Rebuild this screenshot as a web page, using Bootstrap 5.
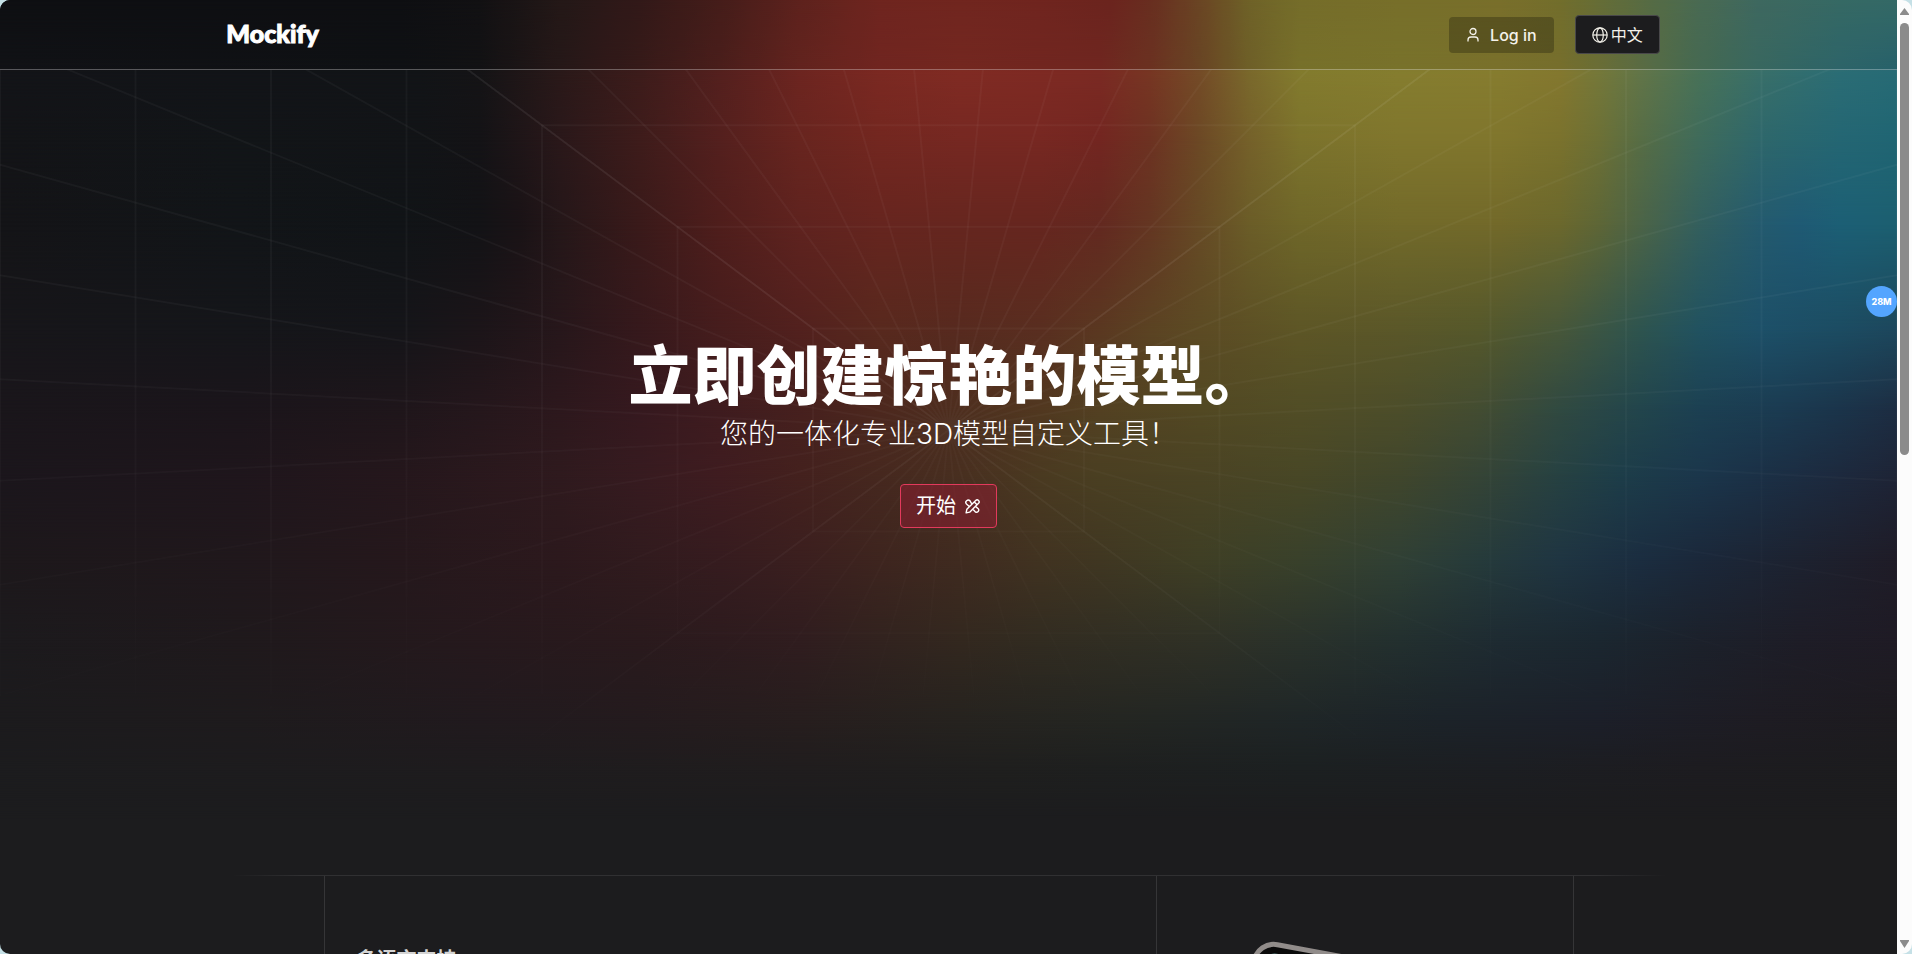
<!DOCTYPE html>
<html lang="zh-CN">
<head>
<meta charset="utf-8">
<meta name="viewport" content="width=device-width, initial-scale=1">
<title>Mockify</title>
<link rel="stylesheet" href="https://cdn.jsdelivr.net/npm/bootstrap@5.3.0/dist/css/bootstrap.min.css">
<style>
  body { background: #c5e0e6; font-family: Inter, "Noto Sans CJK SC", sans-serif; }
  .shell { height: 100vh; }
  .page { background: #1c1c1e; border-radius: 10px 0 0 10px; }
  .wrap { width: 76%; max-width: 1436px; }

  .glow { inset: 0 0 auto 0; height: 820px; }
  .glow-row { position: absolute; inset: 0; }
  .rays { inset: 70px 0 auto 0; height: 780px; -webkit-mask-image: linear-gradient(#000 0, #000 30%, transparent 90%); mask-image: linear-gradient(#000 0, #000 30%, transparent 90%); }
  .rays svg { display: block; width: 100%; height: 780px; }

  .topbar { height: 70px; padding-right: 11px; border-bottom: 1px solid rgba(255,255,255,.3); background: rgba(10,10,12,.08); }
  .brand { font-family: Lato, sans-serif; font-weight: 900; font-size: 25px; line-height: 32px; color: #fff; margin-bottom: 4px; -webkit-text-stroke: 1px #fff; }
  .btn-login, .btn-lang { font-size: 16px; line-height: 24px; color: #f4f2ea; --bs-btn-border-radius: 4px; }
  .btn-login { background: rgba(0,0,0,.25); border: 0; font-weight: 500; height: 36px; padding: 0 17px; gap: 10px; }
  .btn-lang { background: #1c1c1e; border: 1px solid #49484a; height: 39px; padding: 0 16px; gap: 3px; }

  .hero { padding-top: 268px; }
  .hero h1 { font-size: 64px; line-height: 76px; font-weight: 900; color: #fff; }
  .hero p { font-size: 28px; line-height: 40px; font-weight: 300; color: #fff; }
  .btn-start { font-size: 20px; line-height: 28px; color: #fff; height: 44px; margin-top: 30px; padding: 0 15px; gap: 8px; background: rgba(146,28,50,.5); border: 1px solid #e23a5c; --bs-btn-border-radius: 4px; }

  .features { margin-top: 347px; }
  .rule { height: 1px; background: linear-gradient(90deg, transparent, #303032 5%, #303032 95%, transparent); }
  .cells { width: 1250px; max-width: 88%; border: solid #353537; border-width: 0 1px; }
  .cell-text { border-right: 1px solid #353537; padding: 70px 32px 0; }
  .cell-text h2 { font-size: 20px; line-height: 28px; font-weight: 700; color: #d4d4d4; }
  .phone { padding: 65px 0 0 101px; }
  .phone svg { display: block; overflow: visible; }

  .meter { right: 15px; top: 286px; width: 31px; height: 31px; background: #54a5ff; font-size: 9px; font-weight: 800; color: #fff; }
  .scroller { width: 15px; background: #fcfcfc; border-radius: 0 10px 10px 0; padding: 8px 0 6px; }
  .thumb { width: 9px; height: 46%; background: #8b8b8b; border-radius: 5px; margin-top: 7px; }
</style>
</head>
<body>
<div class="shell d-flex overflow-hidden position-relative">
  <div class="page flex-fill position-relative overflow-hidden">
    <div class="glow position-absolute" id="glow" aria-hidden="true"></div>
    <div class="rays position-absolute overflow-hidden" aria-hidden="true">
      <svg viewBox="0 0 1897 780" preserveAspectRatio="none" fill="none" stroke="#fff" stroke-width="2" id="rays"></svg>
    </div>

    <div class="position-relative">
      <header class="topbar d-flex">
        <div class="wrap mx-auto d-flex align-items-center">
          <a class="brand text-decoration-none me-auto" href="#">Mockify</a>
          <div class="d-flex align-items-center" style="gap:21px">
            <button type="button" class="btn btn-login d-flex align-items-center">
              <svg width="14" height="16" viewBox="0 0 14 16" fill="none" stroke="currentColor" stroke-width="1.3"><circle cx="7" cy="4.5" r="3"/><path d="M2 14.5v-1.5a3 3 0 0 1 3-3h4a3 3 0 0 1 3 3v1.500"/></svg>
              Log in
            </button>
            <button type="button" class="btn btn-lang d-flex align-items-center">
              <svg width="16" height="16" viewBox="0 0 16 16" fill="none" stroke="currentColor" stroke-width="1.2"><circle cx="8" cy="8" r="7.200"/><ellipse cx="8" cy="8" rx="3.300" ry="7.200"/><path d="M1 8h14"/></svg>
              中文
            </button>
          </div>
        </div>
      </header>

      <main>
        <section class="hero text-center d-flex flex-column align-items-center">
          <h1 class="mb-0">立即创建惊艳的模型。</h1>
          <p class="mb-0">您的一体化专业3D模型自定义工具！</p>
          <button type="button" class="btn btn-start d-flex align-items-center">
            开始
            <svg width="17" height="17" viewBox="0 0 24 24" fill="none" stroke="currentColor" stroke-width="2" stroke-linejoin="round" stroke-linecap="round"><path d="M10.500 7.500 8.500 4a3.300 3.300 0 0 0-5 4.500L7.500 12M13.500 17l3 3a3.300 3.300 0 0 0 4-4.500L17 12.500M3 21l1-5L16.500 3.500a2.800 2.800 0 0 1 4 4L8 20zM14.500 5.500l4 4"/></svg>
          </button>
        </section>

        <section class="features wrap mx-auto">
          <div class="rule"></div>
          <div class="cells row g-0 mx-auto">
            <div class="col-8 cell-text"><h2>多语言支持</h2></div>
            <div class="col-4 phone">
              <svg width="200" height="120" viewBox="0 0 200 120" aria-hidden="true"><g transform="translate(16 0) rotate(10.500)"><rect x="-16" y="3" width="150" height="300" rx="20" fill="#0a0a0a" stroke="#918c8a" stroke-width="5"/><rect x="-7" y="12" width="132" height="282" rx="12" fill="#5f8c8a"/></g></svg>
            </div>
          </div>
        </section>
      </main>
    </div>
  </div>

  <div class="scroller d-flex flex-column align-items-center" aria-hidden="true">
    <svg width="9" height="8" viewBox="0 0 9 8"><path d="M4.500 0 9 6v1H0V6z" fill="#8b8b8b"/></svg>
    <div class="thumb"></div>
    <svg class="mt-auto" width="9" height="8" viewBox="0 0 9 8"><path d="M4.500 8 9 1V0H0v1z" fill="#8b8b8b"/></svg>
  </div>

  <div class="meter position-absolute rounded-circle d-flex align-items-center justify-content-center">28M</div>
</div>

<script src="https://cdn.jsdelivr.net/npm/bootstrap@5.3.0/dist/js/bootstrap.bundle.min.js"></script>
<script>
  // Mesh gradient: every row is a horizontal ramp, faded in over the row above it.
  const base = 1897;
  const mesh = [
    [0, '0 0f1013 400 0f1013 480 131214 560 261918 640 361b1a 720 4a1f1c 800 65241f 880 782821 960 7a2921 1040 792821 1110 742720 1150 703122 1200 724a26 1250 786a2b 1300 7e762d 1400 80782d 1500 83782e 1560 7b772f 1600 6d763b 1650 5d7449 1700 4f7259 1760 437067 1840 3a716c 1897 38716e'],
    [69, '0 121317 400 101215 480 131315 560 281919 640 3a1c1b 720 50201d 800 6a2520 880 792822 960 7c2a22 1040 7a2922 1100 782922 1150 733523 1200 704a26 1250 77672b 1300 80792d 1400 827b2e 1500 83792e 1560 7f772f 1600 72763a 1640 617448 1700 4a7158 1760 3c6f67 1840 306c71 1897 2a6972'],
    [72, '0 131418 240 121418 420 121417 480 151416 560 2a1919 640 3d1c1b 720 54201e 800 6d2520 880 7b2922 960 802b23 1040 7e2a23 1100 7b2a23 1150 773623 1200 744b27 1250 7a692c 1300 837b2e 1400 857d2f 1500 867c2f 1560 84782f 1600 74783a 1640 627548 1700 487258 1760 396f69 1840 2b6d75 1897 276b75'],
    [140, '0 131417 240 121518 420 121417 480 141316 560 2a181a 640 3e1c1b 720 54201e 800 68251f 880 732720 960 762822 1040 772822 1100 732621 1150 6d3222 1200 6c4925 1250 75612a 1300 7c732c 1400 80762d 1500 80762d 1560 7a722d 1600 6c7036 1640 576d45 1700 3f6b5b 1760 2e676b 1840 246673 1897 206573'],
    [225, '0 141417 240 121518 400 111417 480 131316 520 1a1316 560 251719 640 3a1a1a 720 4f1e1c 800 5f231f 880 66251f 960 66261f 1040 66261f 1100 632920 1150 643622 1200 664a25 1250 6b5d28 1300 6f6729 1400 726a2a 1500 72692a 1560 6b682d 1600 5d6637 1640 4c6447 1700 335f5e 1760 245a6e 1800 1f5a74 1840 1c5f75 1897 1c5f70'],
    [330, '0 17161a 240 15161a 400 151519 480 1c1519 560 27171b 640 36191c 720 461d1d 800 52211e 880 58291e 960 572a1f 1040 592e20 1100 5a3821 1150 5b4323 1200 5c4b24 1300 5d5626 1400 5a5729 1480 55582b 1560 47573a 1640 2e544f 1700 215260 1760 1d5068 1840 1c4c62 1897 1d475c'],
    [410, '0 1a161b 240 1b151b 400 1f161b 480 25171c 560 2d181d 640 36191f 720 3f1c1f 800 46201e 880 4c281e 960 4e2f1f 1040 513820 1100 534122 1200 524823 1300 514d26 1400 4c4d2a 1480 434c32 1560 304941 1640 22454c 1700 1c4052 1780 1b3b51 1840 1b344a 1897 1d2d42'],
    [477, '0 1b161c 240 1f161c 400 25171c 560 2f1a1e 640 371b20 720 3f1c20 800 44211e 880 46281f 960 482f20 1040 4a3a21 1100 4a3f22 1200 4a4324 1300 484726 1400 40462c 1480 354436 1560 264142 1620 1d3d49 1700 1b364b 1760 1b3046 1840 1d293d 1897 1e2436'],
    [560, '0 1d181b 240 20181c 400 25181c 560 2c191d 640 311b1e 720 361c1f 800 3b1f1f 880 3e251f 960 402b20 1040 413321 1100 403722 1200 3f3f25 1300 39412b 1400 304035 1480 263b3b 1560 1f3542 1640 1b2d40 1700 1b283a 1800 1d2230 1897 1f1c27'],
    [640, '0 1c1a1d 240 1f191c 480 26191d 640 2a1a1d 720 2d1b1e 800 301d1f 880 32231f 960 33281f 1040 322c21 1200 303126 1300 2a322b 1400 23302f 1500 1e2b32 1600 1b2730 1700 1c212b 1800 1e1d27 1897 1f1b25'],
    [720, '0 1c1b1d 240 1e1b1d 480 211a1e 640 241b1e 800 271e1e 960 26231f 1120 242622 1300 1f2627 1440 1c2329 1600 1c1f29 1760 1e1c23 1897 1d1b1f'],
    [770, '0 1c1c1e 480 1e1c1e 800 201d1e 1000 1f1f1e 1300 1c2021 1500 1c1e22 1700 1d1c20 1897 1c1c1e'],
    [820, '0 1c1c1e 1897 1c1c1e']
  ];
  const glow = document.getElementById('glow');
  mesh.forEach(([y, ramp], i) => {
    const t = ramp.split(' ');
    const stops = [];
    for (let k = 0; k < t.length; k += 2) stops.push(`#${t[k + 1]} ${(t[k] / base * 100).toFixed(2)}%`);
    const row = document.createElement('div');
    row.className = 'glow-row';
    row.style.backgroundImage = `linear-gradient(90deg, ${stops.join(', ')})`;
    if (i) {
      const fade = `linear-gradient(transparent ${mesh[i - 1][0]}px, #000 ${y}px)`;
      row.style.webkitMaskImage = fade;
      row.style.maskImage = fade;
    }
    glow.appendChild(row);
  });

  // Perspective tunnel: 7 nested frames and rays every 8.18 degrees round the vanishing point.
  const cx = base / 2, cy = 360, hw = base / 2, hh = 711, n = 7;
  let frames = '', rays = '';
  for (let i = 1; i <= n; i++) {
    const w = hw * i / n, h = hh * i / n;
    frames += `M${cx - w} ${cy - h}h${2 * w}v${2 * h}h${-2 * w}z`;
  }
  for (let i = 0; i < 44; i++) {
    const a = (i + 0.5) * Math.PI / 22;
    const m = Math.max(Math.abs(Math.cos(a)), Math.abs(Math.sin(a)));
    rays += `M${cx} ${cy}L${cx + hw * Math.cos(a) / m} ${cy + hh * Math.sin(a) / m}`;
  }
  const diag = `M${cx - hw} ${cy - hh}L${cx + hw} ${cy + hh}M${cx + hw} ${cy - hh}L${cx - hw} ${cy + hh}`;
  document.getElementById('rays').innerHTML =
    `<path d="${frames}" opacity=".035"/><path d="${rays}" opacity=".035"/><path d="${diag}" opacity=".04"/>`;
</script>
</body>
</html>
